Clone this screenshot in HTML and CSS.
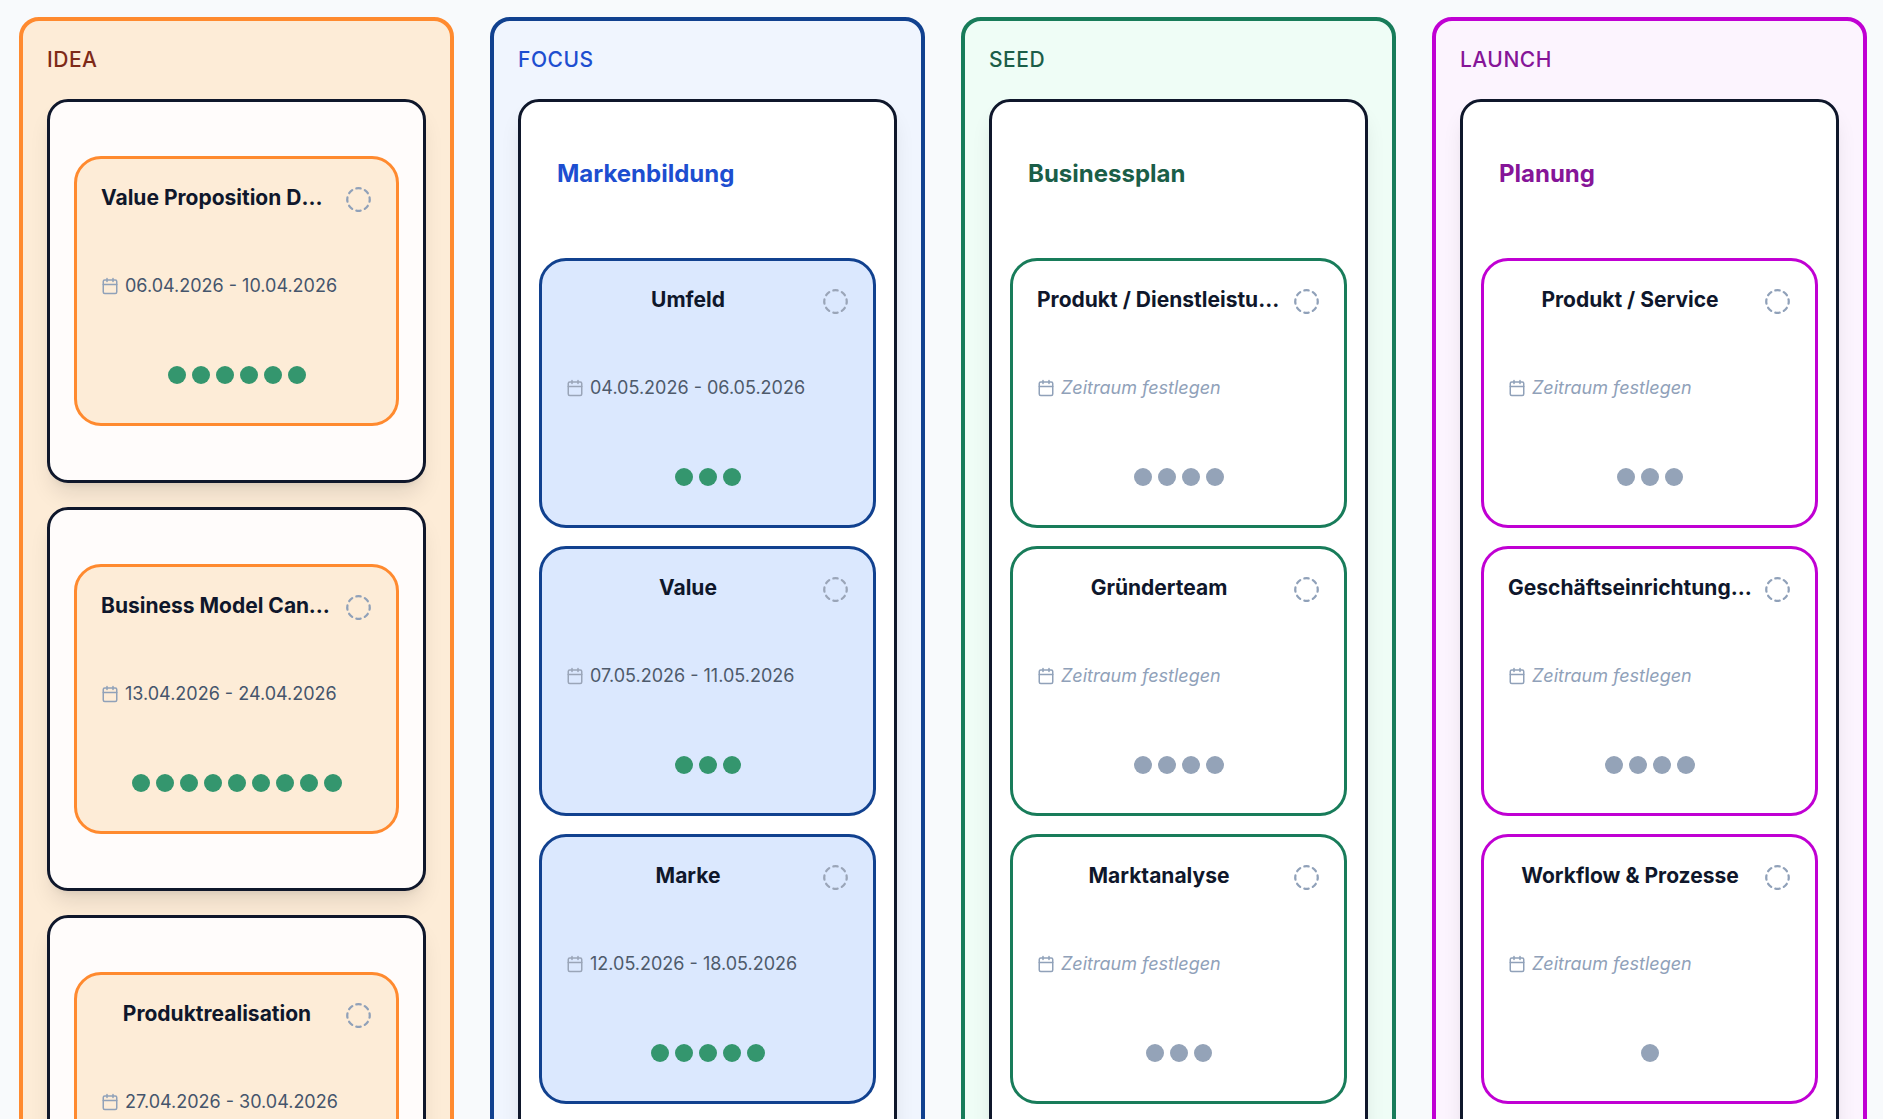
FILE: index.html
```html
<!DOCTYPE html>
<html lang="de">
<head>
<meta charset="utf-8">
<meta name="viewport" content="width=device-width, initial-scale=1">
<title>Phasen</title>
<link rel="stylesheet" href="styles.css">
</head>
<body>
<svg class="sprite" aria-hidden="true">
  <symbol id="ring" viewBox="0 0 24 24">
    <path d="M10.1 2.182a10 10 0 0 1 3.8 0M13.9 21.818a10 10 0 0 1-3.8 0M17.609 3.721a10 10 0 0 1 2.69 2.7M2.182 13.9a10 10 0 0 1 0-3.8M20.279 17.609a10 10 0 0 1-2.7 2.69M21.818 10.1a10 10 0 0 1 0 3.8M3.721 6.391a10 10 0 0 1 2.7-2.69M6.391 20.279a10 10 0 0 1-2.69-2.7"/>
  </symbol>
  <symbol id="calendar" viewBox="0 0 24 24">
    <path d="M8 2v4M16 2v4M3 10h18"/>
    <rect x="3" y="4" width="18" height="18" rx="2"/>
  </symbol>
</svg>
<main class="board" id="board"></main>
<script src="board.js"></script>
</body>
</html>
```

FILE: styles.css
```css
* {box-sizing: border-box;}
body {
  margin: 0;
  height: 100vh;
  overflow: hidden;
  background: #f8fafc;
  color: #0f172b;
  font-family: Inter, "Liberation Sans", sans-serif;
}
h2, h3, h4 {margin: 0;}
button {
  padding: 0;
  border: 0;
  background: none;
  color: inherit;
  font: inherit;
  cursor: pointer;
}
.sprite {display: none;}
.icon {
  display: block;
  flex: none;
  fill: none;
  stroke: var(--icon);
  stroke-width: 2;
  stroke-linecap: round;
  stroke-linejoin: round;
}

.board {
  display: grid;
  grid-template-columns: repeat(4, minmax(0, 1fr));
  gap: 36px;
  padding: 17px 16px 17px 19px;
}

/* phase column */
.phase {
  --icon: #90a1b9;
  --date: #45556c;
  display: flex;
  flex-direction: column;
  gap: 24px;
  padding: 24px;
  border: 4px solid var(--line);
  border-radius: 20px;
  background: var(--bg);
}
.phase-name {
  color: var(--head);
  font-size: 21px;
  font-weight: 500;
  line-height: 30px;
  letter-spacing: 0.5px;
}
.idea {--line: #ff8a2f; --bg: #fdecd7; --head: #7e2a18; --task: #fdecd7;}
.focus {--line: #11418f; --bg: #f0f5fe; --head: #1d4ed0; --task: #dbe8fe; --icon: #9aa5b8; --date: #4e5a6b;}
.seed {--line: #187c5a; --bg: #effdf6; --head: #1b5e48; --task: #fff;}
.launch {--line: #c000d3; --bg: #fcf4fe; --head: #861598; --task: #fff;}

/* group of tasks */
.group {
  padding: 0 18px 18px;
  border: 3px solid #0f172b;
  border-radius: 21px;
  background: #fff;
  box-shadow: 0 15px 22px -4px rgba(0, 0, 0, .1), 0 6px 9px -6px rgba(0, 0, 0, .1);
}
.idea .group {padding: 54px 24px; background: #fffcfb;}
.focus .group, .seed .group, .launch .group {flex: 1;}
.group-name {
  padding: 54px 18px 66px;
  color: var(--head);
  font-size: 24px;
  font-weight: 700;
  line-height: 36px;
}
.tasks {
  display: grid;
  grid-template-columns: minmax(0, 1fr);
  gap: 18px;
}

/* task card */
.task {
  padding: 24px 24px 39px;
  border: 3px solid var(--line);
  border-radius: 27px;
  background: var(--task);
}
.task-head {
  display: flex;
  align-items: flex-end;
  gap: 12px;
}
.task-name {
  flex: 1;
  overflow: hidden;
  font-size: 21px;
  font-weight: 700;
  line-height: 30px;
  text-align: center;
  text-overflow: ellipsis;
  white-space: nowrap;
}
.ring {width: 27px; height: 27px;}
.dates {
  display: flex;
  align-items: center;
  gap: 6px;
  margin: 59px 0 67px;
  color: var(--date);
  font-size: 18px;
  line-height: 27px;
}
.dates.empty {color: #90a1b9; font-style: italic;}
.calendar {width: 18px; height: 18px;}
.dots {
  display: flex;
  justify-content: center;
  gap: 6px;
}
.dot {
  width: 18px;
  height: 18px;
  border-radius: 50%;
  background: #94a3b8;
}
.dot.done {background: #34966e;}
```

FILE: board.js
```js
var phases = [
  {key: "idea", name: "IDEA", groups: [
    {tasks: [["Value Proposition Design", "06.04.2026 - 10.04.2026", 6]]},
    {tasks: [["Business Model Canvas", "13.04.2026 - 24.04.2026", 9]]},
    {tasks: [["Produktrealisation", "27.04.2026 - 30.04.2026", 4]]}
  ]},
  {key: "focus", name: "FOCUS", groups: [
    {name: "Markenbildung", tasks: [
      ["Umfeld", "04.05.2026 - 06.05.2026", 3],
      ["Value", "07.05.2026 - 11.05.2026", 3],
      ["Marke", "12.05.2026 - 18.05.2026", 5]
    ]}
  ]},
  {key: "seed", name: "SEED", groups: [
    {name: "Businessplan", tasks: [
      ["Produkt / Dienstleistung", "", 4],
      ["Gründerteam", "", 4],
      ["Marktanalyse", "", 3]
    ]}
  ]},
  {key: "launch", name: "LAUNCH", groups: [
    {name: "Planung", tasks: [
      ["Produkt / Service", "", 3],
      ["Geschäftseinrichtung & Ausstattung", "", 4],
      ["Workflow & Prozesse", "", 1]
    ]}
  ]}
];

function esc(str) {
  return str.replace(/&/g, "&amp;");
}

function icon(name) {
  return '<svg class="icon ' + name + '" aria-hidden="true"><use href="#' + name + '"/></svg>';
}

function taskHtml(t) {
  var dot = '<span class="dot' + (t[1] ? ' done' : '') + '"></span>';
  return '<article class="task">' +
    '<div class="task-head"><h4 class="task-name">' + esc(t[0]) + '</h4>' +
    '<button type="button" aria-label="Status">' + icon("ring") + '</button></div>' +
    '<button type="button" class="dates' + (t[1] ? '' : ' empty') + '">' + icon("calendar") +
    '<span>' + (t[1] || "Zeitraum festlegen") + '</span></button>' +
    '<div class="dots">' + dot.repeat(t[2]) + '</div>' +
    '</article>';
}

function groupHtml(g) {
  return '<div class="group">' +
    (g.name ? '<h3 class="group-name">' + g.name + '</h3>' : '') +
    '<div class="tasks">' + g.tasks.map(taskHtml).join("") + '</div></div>';
}

document.getElementById("board").innerHTML = phases.map(function(p) {
  return '<section class="phase ' + p.key + '"><h2 class="phase-name">' + p.name + '</h2>' +
    p.groups.map(groupHtml).join("") + '</section>';
}).join("");
```
